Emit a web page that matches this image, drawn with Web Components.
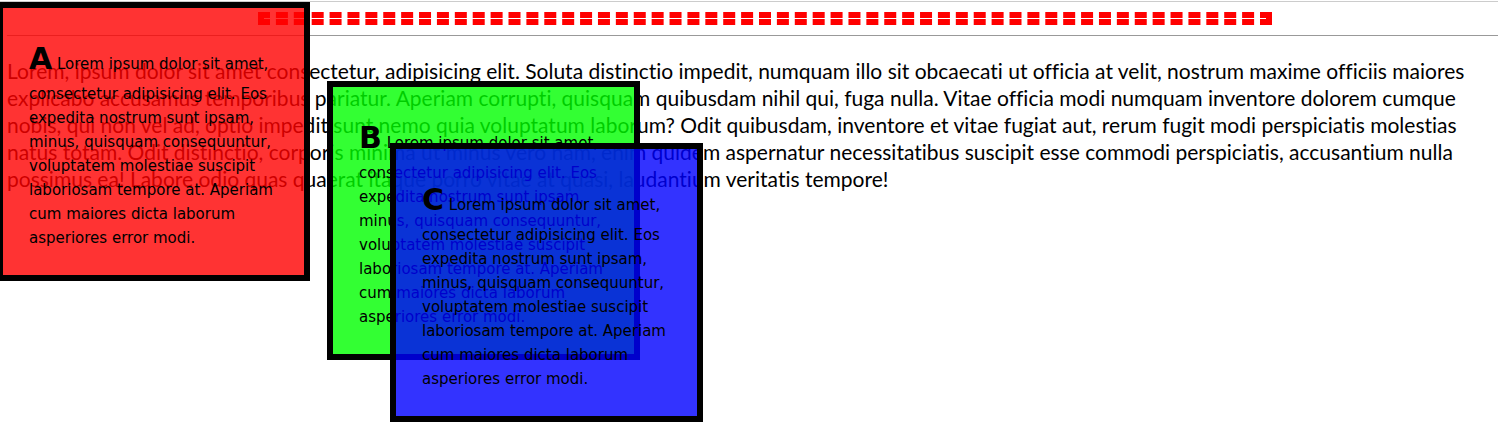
<!DOCTYPE html>
<html lang="la">
<head>
<meta charset="utf-8">
<title>Position and overlap</title>
<style>
body { margin: 0; background: #fff; color: #000; font-family: Lato, sans-serif; }
</style>
</head>
<body>
<demo-page>
  <dashed-rule></dashed-rule>
  <thin-rule></thin-rule>
  <body-copy>Lorem, ipsum dolor sit amet consectetur, adipisicing elit. Soluta distinctio impedit, numquam illo sit obcaecati ut officia at velit, nostrum maxime officiis maiores<br>explicabo accusamus temporibus pariatur. Aperiam corrupti, quisquam quibusdam nihil qui, fuga nulla. Vitae officia modi numquam inventore dolorem cumque<br>nobis, qui non vel ad, optio impedit sunt nemo quia voluptatum laborum? Odit quibusdam, inventore et vitae fugiat aut, rerum fugit modi perspiciatis molestias<br>natus totam. Odit distinctio, corporis minima ut minus vero nam, enim quidem aspernatur necessitatibus suscipit esse commodi perspiciatis, accusantium nulla<br>possimus ea! Labore odio quas quaerat itaque porro vitae at quasi, laudantium veritatis tempore!</body-copy>
  <overlap-box slot="boxes" name="A" tone="red"></overlap-box>
  <overlap-box slot="boxes" name="B" tone="green"></overlap-box>
  <overlap-box slot="boxes" name="C" tone="blue"></overlap-box>
</demo-page>

<template id="page-tpl">
  <style>
    :host { display: block; position: relative; box-sizing: border-box; min-height: 100vh; padding: 1px 0 8px; overflow-x: clip; }
    .top { border: 0; border-top: 1px solid #ccc; margin: 0; }
    main { padding: 10px 0 0 7px; }
  </style>
  <hr class="top">
  <main><slot></slot></main>
  <slot name="boxes"></slot>
</template>

<template id="dashed-tpl">
  <style>
    :host { display: block; }
    hr { box-sizing: border-box; width: 68%; height: 13px; margin: 0 0 0 251px; border: 6px dashed #f00; }
  </style>
  <hr>
</template>

<template id="thin-tpl">
  <style>
    :host { display: block; margin-top: 10px; }
    hr { margin: 0; border: 0; border-top: 1px solid #999; }
  </style>
  <hr>
</template>

<template id="copy-tpl">
  <style>
    :host { display: block; margin-top: 21px; }
    p { margin: 0; font-size: 21px; line-height: 27px; font-variant-ligatures: none; }
  </style>
  <p><slot></slot></p>
</template>

<template id="box-tpl">
  <style>
    :host { display: block; position: absolute; box-sizing: border-box; width: 313px; padding: 28px 25px 25px 26px; border: 6px solid #000; font-family: "DejaVu Sans", sans-serif; }
    :host([tone="red"]) { left: -3px; top: 2px; background: rgba(255, 0, 0, .8); }
    :host([tone="green"]) { left: 327px; top: 81px; background: rgba(0, 255, 0, .8); }
    :host([tone="blue"]) { left: 390px; top: 143px; background: rgba(0, 0, 255, .8); }
    p { margin: 0; font-size: 15px; line-height: 24px; }
    strong { font-size: 30px; line-height: 46px; }
  </style>
  <p><strong></strong> Lorem ipsum dolor sit amet, consectetur adipisicing elit. Eos expedita nostrum sunt ipsam, minus, quisquam consequuntur, voluptatem molestiae suscipit laboriosam tempore at. Aperiam cum maiores dicta laborum asperiores error modi.</p>
</template>

<script>
function attach(host, id) {
  const root = host.attachShadow({ mode: "open" });
  root.append(document.getElementById(id).content.cloneNode(true));
  return root;
}
customElements.define("demo-page", class extends HTMLElement {
  constructor() { super(); attach(this, "page-tpl"); }
});
customElements.define("dashed-rule", class extends HTMLElement {
  constructor() { super(); attach(this, "dashed-tpl"); }
});
customElements.define("thin-rule", class extends HTMLElement {
  constructor() { super(); attach(this, "thin-tpl"); }
});
customElements.define("body-copy", class extends HTMLElement {
  constructor() { super(); attach(this, "copy-tpl"); }
});
customElements.define("overlap-box", class extends HTMLElement {
  constructor() {
    super();
    attach(this, "box-tpl").querySelector("strong").textContent = this.getAttribute("name");
  }
});
</script>
</body>
</html>
